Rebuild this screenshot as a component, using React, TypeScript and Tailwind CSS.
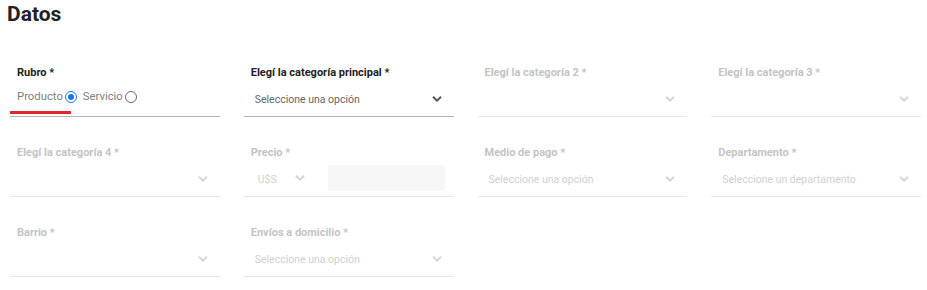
// App.tsx
const Chevron = ({ active }: { active?: boolean }) => (
    <svg width="12" height="8" viewBox="0 0 12 8" className={active ? 'text-[#555]' : 'text-[#d4d4d4]'}>
        <polyline points="2,1.8 6,5.6 10,1.8" fill="none" stroke="currentColor" strokeWidth="1.9" />
    </svg>
);

type FieldProps = {
    label: string;
    placeholder?: string;
    active?: boolean;
};

const SelectField = ({ label, placeholder, active }: FieldProps) => (
    <div>
        <div className={`px-[7px] text-[11px] leading-[16px] font-bold ${active ? 'text-[#222]' : 'text-[#c4c4c4]'}`}>{label}</div>
        <div className={`h-[36px] flex items-center justify-between pl-[11px] pr-[11px] border-b ${active ? 'border-[#b4b4b4]' : 'border-[#e8e8e8]'}`}>
            <span className={`mt-[3px] text-[10.5px] ${active ? 'text-[#666]' : 'text-[#d0d0d0]'}`}>{placeholder}</span>
            <Chevron active={active} />
        </div>
    </div>
);

const Radio = ({ checked }: { checked?: boolean }) => (
    <span className={`inline-flex items-center justify-center w-[12px] h-[12px] rounded-full border ${checked ? 'border-[#1a73e8]' : 'border-[#666]'}`}>
        {checked && <span className="w-[6px] h-[6px] rounded-full bg-[#1a73e8]" />}
    </span>
);

const RubroField = () => (
    <div>
        <div className="px-[7px] text-[11px] leading-[16px] font-bold text-[#222]">Rubro *</div>
        <div className="h-[36px] border-b border-[#b4b4b4] flex flex-col">
            <div className="h-[30px] flex items-center gap-[6px] pl-[7px] pt-[2px] text-[11.3px] text-[#808080]">
                <span className="flex items-center gap-[2px]">Producto <Radio checked /></span>
                <span className="flex items-center gap-[2px]">Servicio <Radio /></span>
            </div>
            <div className="w-[61px] h-[3px] bg-[#e3262b]" />
        </div>
    </div>
);

const PrecioField = () => (
    <div>
        <div className="px-[7px] text-[11px] leading-[16px] font-bold text-[#c4c4c4]">Precio *</div>
        <div className="h-[36px] flex items-center border-b border-[#e8e8e8] pl-[14px] pb-[1px]">
            <span className="mt-[3px] text-[10.5px] text-[#d0d0d0] w-[36px]">U$S</span>
            <Chevron />
            <div className="ml-[22px] w-[117px] h-[26px] bg-[#f7f7f7]" />
        </div>
    </div>
);

export default function App() {
    return (
        <div className="bg-white w-[927px] h-[290px] pl-[10px] pr-[6px]" style={{ fontFamily: 'Roboto, sans-serif' }}>
            <h2 className="-ml-[3px] text-[21px] leading-[28px] font-bold text-[#222]">Datos</h2>
            <div className="mt-[37px] grid grid-cols-4 gap-x-6 gap-y-[28px]">
                <RubroField />
                <SelectField label="Elegí la categoría principal *" placeholder="Seleccione una opción" active />
                <SelectField label="Elegí la categoría 2 *" />
                <SelectField label="Elegí la categoría 3 *" />
                <SelectField label="Elegí la categoría 4 *" />
                <PrecioField />
                <SelectField label="Medio de pago *" placeholder="Seleccione una opción" />
                <SelectField label="Departamento *" placeholder="Seleccione un departamento" />
                <SelectField label="Barrio *" />
                <SelectField label="Envíos a domicilio *" placeholder="Seleccione una opción" />
            </div>
        </div>
    );
}
